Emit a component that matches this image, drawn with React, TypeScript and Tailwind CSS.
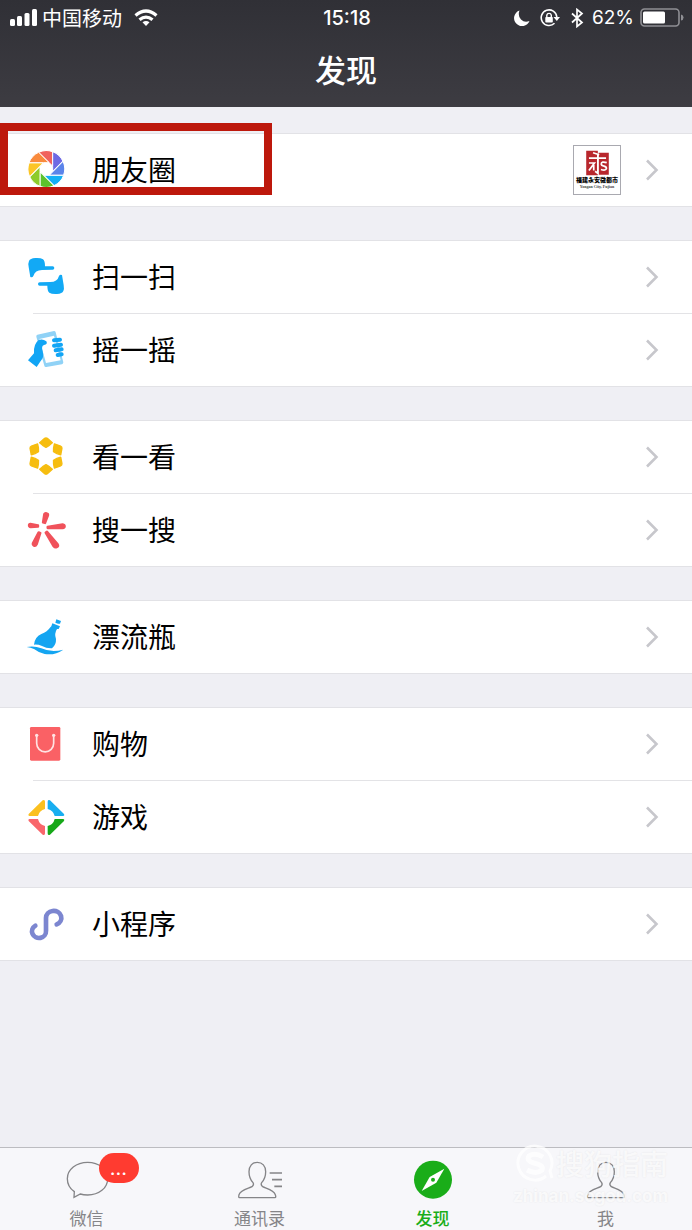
import React from "react";

type IconProps = { children: React.ReactNode };

function RowIcon({ children }: IconProps) {
  return (
    <svg viewBox="0 0 120 120" className="size-10 shrink-0" aria-hidden="true">
      {children}
    </svg>
  );
}

const bladeColors = ["#f0625d", "#6e69e4", "#5b84ea", "#14b0f5", "#5cc22c", "#8ecb2b", "#fbc526", "#f98a3c"];

function MomentsIcon() {
  return (
    <RowIcon>
      <g transform="translate(61 57)">
        {bladeColors.map((color, i) => (
          <path
            key={color}
            d="M19 -52A55.400 55.400 0 0 1 50 -23L19 8V-8Z"
            fill={color}
            stroke="#fff"
            strokeWidth="3"
            transform={`rotate(${i * 45 - 45})`}
          />
        ))}
      </g>
    </RowIcon>
  );
}

const scanHand =
  "M9 12Q12 4 28 3Q44 2 51 7Q57 12 57 28H80Q85 28 85 33Q85 38 80 38L48 39Q27 39 22 57Q19 63 13 60L8 30Q6 18 9 12Z";

function ScanIcon() {
  return (
    <RowIcon>
      <path d={scanHand} fill="#12a9f5" />
      <path d={scanHand} fill="#12a9f5" transform="rotate(180 60.500 57)" />
    </RowIcon>
  );
}

function ShakeIcon() {
  return (
    <RowIcon>
      <path d="M34 14L84 3Q88 3 89 7L112 97Q112 102 108 103L61 111Q56 112 55 107L31 20Q30 16 34 14Z" fill="#90d2f6" />
      <path d="M40 27L84 17L104 91L60 99Z" fill="#fff" />
      <path d="M6 91L24 70Q22 42 38 30Q50 25 61 34Q66 43 54 45Q45 48 50 64Q55 82 44 93L32 111Z" fill="#12a5f5" />
      <g stroke="#12a5f5" strokeWidth="12" strokeLinecap="round">
        <path d="M84 31L102 29" />
        <path d="M84 47L105 44" />
        <path d="M89 61L107 58" />
        <path d="M95 75L107 73" />
      </g>
    </RowIcon>
  );
}

function LookIcon() {
  return (
    <RowIcon>
      <g transform="translate(60 57)" fill="#f6bd0f" stroke="#f6bd0f" strokeWidth="4" strokeLinejoin="round">
        {[0, 60, 120, 180, 240, 300].map((angle) => (
          <path key={angle} d="M-4 -53Q0 -56 4 -53L19 -40L10 -32L0 -26L-10 -32L-19 -40Z" transform={`rotate(${angle})`} />
        ))}
      </g>
    </RowIcon>
  );
}

function SearchIcon() {
  return (
    <RowIcon>
      <g fill="#f0525b" stroke="#f0525b" strokeWidth="7" strokeLinejoin="round">
        <path d="M55 12Q57 8 62 10Q67 11 66 16L57 39L51 37Z" />
        <path d="M110 43Q116 44 116 49Q116 54 110 54L65 54V51Z" />
        <path d="M13 42L36 46V50L14 51Q9 51 9 46Q9 42 13 42Z" />
        <path d="M38 67L43 69L32 103Q29 109 24 107Q19 104 21 99Z" />
        <path d="M59 68L63 65L95 103Q98 108 93 111Q87 114 83 109Z" />
      </g>
    </RowIcon>
  );
}

function BottleIcon() {
  return (
    <RowIcon>
      <g fill="#14a5f1">
        <path d="M91 7L97 9L105 12L102 20L96 20L88 17Z" />
        <path d="M79 19L102 28L98 36L93 36Q84 50 90 66Q91 83 78 94Q62 95 48 87Q36 82 24 83Q26 60 46 51Q64 45 73 31L76 28Z" />
        <path d="M2 90Q24 85 46 94Q76 108 112 98Q86 116 56 111Q38 107 24 96Q14 91 2 90Z" />
      </g>
    </RowIcon>
  );
}

function ShoppingIcon() {
  return (
    <RowIcon>
      <rect x="12" y="9" width="91" height="101" rx="4" fill="#fa6165" />
      <path d="M32 34V58A25.500 25.500 0 0 0 83 58V34" fill="none" stroke="#ffe3e3" strokeWidth="5" />
      <circle cx="32" cy="34" r="5" fill="#ffe3e3" />
      <circle cx="83" cy="34" r="5" fill="#ffe3e3" />
    </RowIcon>
  );
}

const gamePiece = "M8 51L50 10Q57 6 57 14V36Q40 40 36 57H10Q5 56 8 51Z";

function GamesIcon() {
  return (
    <RowIcon>
      <path d={gamePiece} fill="#fbc01f" />
      <path d={gamePiece} fill="#18aef0" transform="translate(122 0) scale(-1 1)" />
      <path d={gamePiece} fill="#f9666b" transform="translate(0 123) scale(1 -1)" />
      <path d={gamePiece} fill="#16a818" transform="translate(122 123) scale(-1 -1)" />
    </RowIcon>
  );
}

function MiniProgramsIcon() {
  return (
    <RowIcon>
      <path
        d="M28 65A21 20 0 1 0 60 81V42A23 21 0 1 1 92 61"
        fill="none"
        stroke="#7c86d0"
        strokeWidth="14"
        strokeLinecap="round"
      />
    </RowIcon>
  );
}

function Chevron() {
  return (
    <svg viewBox="0 0 14 22" className="h-[22px] w-3.5 shrink-0" aria-hidden="true">
      <path d="M2 1.500L11.500 11L2 20.500" fill="none" stroke="#c7c7cc" strokeWidth="2.600" />
    </svg>
  );
}

function Avatar() {
  return (
    <span className="mr-6 flex h-[50px] w-12 shrink-0 flex-col items-center overflow-hidden border border-[#a9a9b0] bg-white pt-1">
      <svg viewBox="0 0 66 76" className="h-[26px] w-[23px] shrink-0" aria-hidden="true">
        <path d="M0 2H34V74H0ZM36 8H66V72H36Z" fill="#b8272d" />
        <g fill="none" stroke="#fff" strokeWidth="5">
          <path d="M20 8L38 14M8 24H58M34 14V68L26 62M8 38H24L8 60M22 44V60" />
          <path d="M60 37Q44 32 44 41Q44 46 52 47Q60 49 59 55Q57 61 43 57" />
        </g>
      </svg>
      <span className="text-[6px] leading-[8px] font-black whitespace-nowrap text-black">福建永安微都市</span>
      <span className="font-['Liberation_Serif',serif] text-[4px] leading-[5px] font-bold whitespace-nowrap text-[#444]">
        Yongan City, Fujian
      </span>
    </span>
  );
}

type Item = { label: string; icon: React.ReactNode; extra?: React.ReactNode; marked?: boolean };

const groups: Item[][] = [
  [{ label: "朋友圈", icon: <MomentsIcon />, extra: <Avatar />, marked: true }],
  [
    { label: "扫一扫", icon: <ScanIcon /> },
    { label: "摇一摇", icon: <ShakeIcon /> },
  ],
  [
    { label: "看一看", icon: <LookIcon /> },
    { label: "搜一搜", icon: <SearchIcon /> },
  ],
  [{ label: "漂流瓶", icon: <BottleIcon /> }],
  [
    { label: "购物", icon: <ShoppingIcon /> },
    { label: "游戏", icon: <GamesIcon /> },
  ],
  [{ label: "小程序", icon: <MiniProgramsIcon /> }],
];

function Group({ items }: { items: Item[] }) {
  return (
    <ul className="relative border-y border-[#e2e2e6] bg-white">
      {items.map((item, i) => (
        <li key={item.label}>
          {i > 0 && <div className="ml-[33px] h-px bg-[#e3e3e6]" />}
          <a href="#" className="flex h-[72px] items-center pr-[33px] pl-[26px]">
            {item.icon}
            <span className="ml-[26px] flex-1 pb-0.5 text-[28px] leading-10 text-black">{item.label}</span>
            {item.extra}
            <Chevron />
          </a>
          {item.marked && (
            <div className="pointer-events-none absolute -top-[11px] left-0 h-[72px] w-[272px] border-8 border-[#bd180c]" />
          )}
        </li>
      ))}
    </ul>
  );
}

function StatusBar() {
  return (
    <div className="grid h-[35px] grid-cols-[1fr_auto_1fr] items-center pr-2 pl-2.5 text-white">
      <div className="flex items-center">
        <svg viewBox="0 0 27 18" className="h-[18px] w-[27px]" fill="#fff" aria-hidden="true">
          <rect x="0" y="10" width="5" height="7" rx="1.500" />
          <rect x="7" y="7" width="5" height="10" rx="1.500" />
          <rect x="14.500" y="4" width="5" height="13" rx="1.500" />
          <rect x="22" y="0" width="5" height="17" rx="1.500" />
        </svg>
        <span className="ml-[5px] text-xl leading-7">中国移动</span>
        <svg viewBox="0 0 24 18" className="ml-3 h-[18px] w-6" fill="none" stroke="#fff" strokeWidth="3.200" aria-hidden="true">
          <path d="M1.500 6.500Q12 -2.500 22.500 6.500" />
          <path d="M5.500 10.800Q12 5.300 18.500 10.800" />
          <path d="M8.500 13.300Q12 10.500 15.500 13.300L12 17Z" fill="#fff" stroke="none" />
        </svg>
      </div>
      <span className="font-['Inter',sans-serif] text-xl leading-7 font-medium">15:18</span>
      <div className="flex items-center justify-end">
        <svg viewBox="0 0 16 16" className="size-4" aria-hidden="true">
          <path d="M5.500 0.500A8 8 0 1 0 15.500 11Q10.500 13 7 9.500Q3.500 5.500 5.500 0.500Z" fill="#fff" />
        </svg>
        <svg viewBox="0 0 20 18" className="ml-2.5 h-[18px] w-5" aria-hidden="true">
          <path d="M14.500 14.300A7.800 7.800 0 1 1 16.800 8" fill="none" stroke="#fff" strokeWidth="1.600" />
          <path d="M13.500 8H20L16.800 12Z" fill="#fff" />
          <rect x="5.300" y="8" width="7.500" height="5.500" rx="0.800" fill="#fff" />
          <path d="M6.800 8V6.200A2.300 2.300 0 0 1 11.300 6.200V8" fill="none" stroke="#fff" strokeWidth="1.400" />
        </svg>
        <svg viewBox="0 0 14 20" className="ml-2.5 h-5 w-3.5" aria-hidden="true">
          <path d="M2 5.500L12 14.500L7 18.500V1.500L12 5.500L2 14.500" fill="none" stroke="#fff" strokeWidth="1.700" />
        </svg>
        <span className="ml-2 font-['Inter',sans-serif] text-[19px] leading-7">62%</span>
        <svg viewBox="0 0 44 20" className="ml-1.5 h-5 w-11" aria-hidden="true">
          <rect x="1" y="1" width="38" height="17" rx="3.500" fill="none" stroke="#8f8f94" strokeWidth="1.600" />
          <rect x="3" y="3.500" width="22" height="12" rx="1.500" fill="#fff" />
          <path d="M41 6.500Q43.500 7 43.500 9.500Q43.500 12 41 12.500Z" fill="#8f8f94" />
        </svg>
      </div>
    </div>
  );
}

const tabIconClass = "h-10 w-12";
const personPath =
  "M64 7C49 7 39 18 39 35C39 53 44 60 51 68Q55 74 48 80C36 86 14 90 9 104Q7 113 10 113H117Q121 113 118 104C113 90 92 86 80 80Q73 74 77 68C84 60 89 53 89 35C89 18 79 7 64 7Z";

const tabs = [
  {
    label: "微信",
    active: false,
    badge: true,
    icon: (
      <svg viewBox="0 0 144 120" className={tabIconClass} aria-hidden="true">
        <path
          d="M34 95C20 85 13 71 13 56C13 28 40 7 74 7S134 28 134 56S108 105 74 105Q61 105 52 102L33 112Z"
          fill="none"
          stroke="#858588"
          strokeWidth="4"
        />
      </svg>
    ),
  },
  {
    label: "通讯录",
    active: false,
    badge: false,
    icon: (
      <svg viewBox="0 0 144 120" className={tabIconClass} fill="none" stroke="#858588" aria-hidden="true">
        <path d={personPath} strokeWidth="4" />
        <path d="M101 39H138M108 59H138M115 79H138" strokeWidth="5" />
      </svg>
    ),
  },
  {
    label: "发现",
    active: true,
    badge: false,
    icon: (
      <svg viewBox="0 0 144 120" className={tabIconClass} aria-hidden="true">
        <circle cx="72" cy="59" r="57" fill="#1aad19" />
        <path d="M106 26L82 68L38 93L62 51Z" fill="#fff" />
        <circle cx="72" cy="59" r="6" fill="#1aad19" />
      </svg>
    ),
  },
  {
    label: "我",
    active: false,
    badge: false,
    icon: (
      <svg viewBox="0 0 144 120" className={tabIconClass} fill="none" stroke="#858588" aria-hidden="true">
        <path d={personPath} strokeWidth="4" transform="translate(8 0)" />
      </svg>
    ),
  },
];

function Watermark() {
  return (
    <div className="pointer-events-none absolute -top-1 right-6 flex flex-col items-end text-white/75 text-shadow-[0_0_2px_rgb(0_0_0/0.08)]">
      <div className="flex h-[38px] items-center">
        <svg viewBox="0 0 38 38" className="size-[38px]" fill="none" stroke="currentColor" aria-hidden="true">
          <path d="M30 32A17 17 0 1 1 34 27L36 34" strokeWidth="3" />
          <path d="M27 13Q19 8 13 12Q10 17 18 19Q28 21 26 26Q20 31 11 26" strokeWidth="5" />
        </svg>
        <span className="ml-0.5 text-[28px] leading-9 font-medium">搜狗指南</span>
      </div>
      <span className="mt-1 font-['Inter',sans-serif] text-[17px] leading-5 font-bold">zhinan.sogou.com</span>
    </div>
  );
}

export default function App() {
  return (
    <div className="flex min-h-screen flex-col bg-[#efeff4] font-['Noto_Sans_CJK_SC',sans-serif]">
      <header className="bg-linear-to-b from-[#303036] to-[#3d3c42] text-white">
        <StatusBar />
        <h1 className="h-[72px] text-center text-[31px] leading-[68px] font-medium">发现</h1>
      </header>
      <main className="flex flex-1 flex-col gap-[33px] pt-[26px] pb-8">
        {groups.map((items) => (
          <Group key={items[0].label} items={items} />
        ))}
      </main>
      <nav className="relative flex border-t border-[#bcbcc0] bg-[#f7f7fa] pt-3">
        {tabs.map((tab) => (
          <a
            key={tab.label}
            href="#"
            aria-current={tab.active ? "page" : undefined}
            className={`flex flex-1 flex-col items-center ${tab.active ? "font-medium text-[#1aad19]" : "text-[#858588]"}`}
          >
            <span className="relative">
              {tab.icon}
              {tab.badge && (
                <span className="absolute -top-[7px] left-9 flex h-[30px] w-10 items-center justify-center rounded-full bg-[#ff3b30] font-['Inter',sans-serif] text-xl leading-none text-white">
                  ...
                </span>
              )}
            </span>
            <span className="mt-1.5 text-[17px] leading-6">{tab.label}</span>
          </a>
        ))}
        <Watermark />
      </nav>
    </div>
  );
}
